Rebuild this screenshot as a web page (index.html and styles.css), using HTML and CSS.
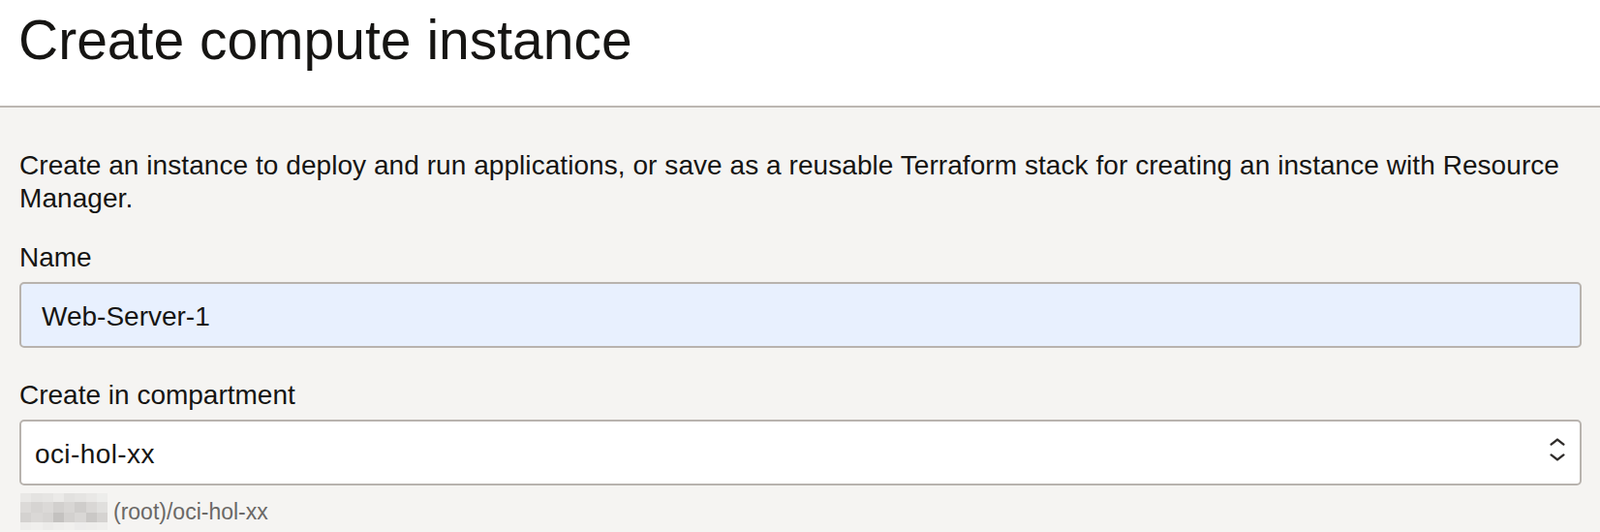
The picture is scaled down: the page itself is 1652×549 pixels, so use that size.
FILE: index.html
```html
<!DOCTYPE html>
<html lang="en">
<head>
<meta charset="utf-8">
<title>Create compute instance</title>
<link rel="stylesheet" href="styles.css">
</head>
<body>
<header class="page-header">
  <h1 class="page-title">Create compute instance</h1>
</header>
<main class="page-body">
  <p class="intro">Create an instance to deploy and run applications, or save as a reusable Terraform stack for creating an instance with Resource Manager.</p>

  <div class="field field-name">
    <label class="field-label" for="instance-name">Name</label>
    <input class="text-input autofilled" id="instance-name" type="text" value="Web-Server-1" readonly>
  </div>

  <div class="field field-compartment">
    <label class="field-label">Create in compartment</label>
    <div class="select">
      <span class="select-value">oci-hol-xx</span>
      <svg class="select-chevrons" width="18" height="24" viewBox="0 0 18 24" aria-hidden="true">
        <path d="M2.6 6.6 L9 1.6 L15.4 6.6" />
        <path d="M2.6 17.4 L9 22.4 L15.4 17.4" />
      </svg>
    </div>
    <div class="path-hint">
      <div class="redacted" aria-hidden="true">
        <span class="c1"></span><span class="c2"></span><span class="c3"></span><span class="c4"></span><span class="c5"></span><span class="c6"></span><span class="c7"></span><span class="c8"></span>
        <span class="d1"></span><span class="d2"></span><span class="d3"></span><span class="d4"></span><span class="d5"></span><span class="d6"></span><span class="d7"></span><span class="d8"></span>
        <span class="e1"></span><span class="e2"></span><span class="e3"></span><span class="e4"></span><span class="e5"></span><span class="e6"></span><span class="e7"></span><span class="e8"></span>
        <span class="f1"></span><span class="f2"></span><span class="f3"></span><span class="f4"></span><span class="f5"></span><span class="f6"></span><span class="f7"></span><span class="f8"></span>
      </div>
      <span class="path-text">(root)/oci-hol-xx</span>
    </div>
  </div>
</main>
</body>
</html>
```

FILE: styles.css
```css
html, body {
  margin: 0;
  padding: 0;
}

body {
  font-family: "Liberation Sans", Arial, Helvetica, sans-serif;
  color: #161513;
  background: #f5f4f2;
  min-height: 549px;
}

.page-header {
  background: #ffffff;
  padding: 7px 19px 34px 19px;
  border-bottom: 2px solid #bcb7b2;
}

.page-title {
  margin: 0;
  font-size: 57px;
  font-weight: 400;
  line-height: 68px;
  color: #161513;
}

.page-body {
  padding: 43px 19px 0 20px;
}

.intro {
  margin: 0;
  font-size: 28px;
  line-height: 34px;
  letter-spacing: 0.06px;
}

.field-label {
  display: block;
  font-size: 28px;
  line-height: 34px;
  color: #161513;
}

.field-name .field-label {
  margin-top: 27px;
}

.field-compartment .field-label {
  margin-top: 32px;
}

.text-input {
  display: block;
  box-sizing: border-box;
  width: 100%;
  height: 68px;
  margin: 8px 0 0 0;
  padding: 4px 20px 0 21px;
  border: 2px solid #b8b3ae;
  border-radius: 5px;
  font-family: inherit;
  font-size: 28px;
  color: #161513;
  background: #ffffff;
  outline: none;
}

.text-input.autofilled {
  background: #e8f0fe;
}

.select {
  display: flex;
  align-items: center;
  box-sizing: border-box;
  height: 68px;
  margin-top: 8px;
  padding: 4px 14px 0 14px;
  border: 2px solid #b8b3ae;
  border-radius: 5px;
  background: #ffffff;
}

.select-value {
  flex: 1;
  font-size: 28px;
  line-height: 34px;
  letter-spacing: 0.4px;
  color: #161513;
}

.select-chevrons {
  flex: none;
  margin-bottom: 10px;
  fill: none;
  stroke: #2e2b29;
  stroke-width: 2.4;
  stroke-linecap: round;
  stroke-linejoin: round;
}

.path-hint {
  display: flex;
  align-items: center;
  margin-top: 8px;
  height: 38px;
}

.redacted {
  display: grid;
  grid-template-columns: repeat(8, 11.25px);
  grid-template-rows: 9px 11px 10px 8px;
  width: 90px;
  height: 38px;
  margin-left: 1px;
  filter: blur(0.6px);
}

.path-text {
  margin-left: 6px;
  font-size: 23px;
  line-height: 38px;
  color: #6a6866;
}

.c1 { background: #e9e8e6; }
.c2 { background: #e4e3e1; }
.c3 { background: #e6e5e3; }
.c4 { background: #ebeae8; }
.c5 { background: #e2e1df; }
.c6 { background: #e5e4e2; }
.c7 { background: #e9e8e6; }
.c8 { background: #ededeb; }

.d1 { background: #dcdad8; }
.d2 { background: #d6d4d2; }
.d3 { background: #dbd9d7; }
.d4 { background: #d2d0ce; }
.d5 { background: #d8d6d4; }
.d6 { background: #cfcdcb; }
.d7 { background: #d9d7d5; }
.d8 { background: #e0dfdd; }

.e1 { background: #d4d2d0; }
.e2 { background: #dad8d6; }
.e3 { background: #d6d4d2; }
.e4 { background: #c4c2c0; }
.e5 { background: #d3d1cf; }
.e6 { background: #d9d7d5; }
.e7 { background: #cac8c6; }
.e8 { background: #d5d3d1; }

.f1 { background: #eeedeb; }
.f2 { background: #f0efed; }
.f3 { background: #ecebe9; }
.f4 { background: #efeeec; }
.f5 { background: #f1f0ee; }
.f6 { background: #edeceb; }
.f7 { background: #eeedeb; }
.f8 { background: #f0efed; }
```
